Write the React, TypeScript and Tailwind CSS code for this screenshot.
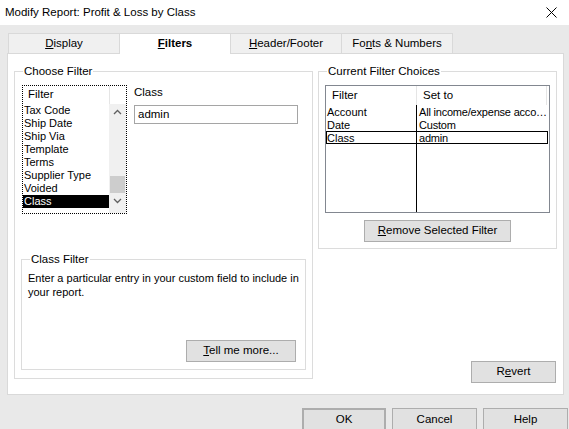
import React from "react";

const ui = { fontFamily: '"Liberation Sans", Arial, sans-serif' };

function Btn({ children, className = "" }: { children: React.ReactNode; className?: string }) {
  return (
    <div
      className={`flex items-center justify-center border border-[#adadad] bg-[#e1e1e1] text-[11.5px] text-black ${className}`}
    >
      {children}
    </div>
  );
}

function Group({ title, className = "", children }: { title: string; className?: string; children: React.ReactNode }) {
  return (
    <div className={`relative border border-[#dcdcdc] ${className}`}>
      <span className="absolute left-[8px] top-[-8px] bg-white px-[1px] text-[11.5px] leading-[14px] text-black">
        {title}
      </span>
      {children}
    </div>
  );
}

const filterItems = ["Tax Code", "Ship Date", "Ship Via", "Template", "Terms", "Supplier Type", "Voided", "Class"];

const choices = [
  ["Account", "All income/expense acco\u2026"],
  ["Date", "Custom"],
  ["Class", "admin"],
];

export default function App() {
  return (
    <div className="h-[429px] w-[569px] overflow-hidden bg-[#e9e9e9] text-black" style={ui}>
      {/* Title bar */}
      <div className="flex h-[25px] items-center justify-between bg-white pl-[5px] pr-[12px]">
        <span className="text-[11.5px]">Modify Report: Profit &amp; Loss by Class</span>
        <svg width="11" height="11" viewBox="0 0 11 11">
          <path d="M0.5 0.5 L10.5 10.5 M10.5 0.5 L0.5 10.5" stroke="#000" strokeWidth="1" />
        </svg>
      </div>

      {/* Tabs */}
      <div className="flex pl-[8px] pt-[8px] text-[11.5px]">
        <div className="flex h-[20px] w-[112px] items-center justify-center border border-b-0 border-[#d9d9d9] bg-[#f0f0f0]">
          <span><u>D</u>isplay</span>
        </div>
        <div className="relative z-10 -mb-px flex h-[21px] w-[111px] items-center justify-center border border-b-0 border-l-0 border-[#d9d9d9] bg-white pb-px font-bold">
          <span><u>F</u>ilters</span>
        </div>
        <div className="flex h-[20px] w-[111px] items-center justify-center border border-b-0 border-l-0 border-[#d9d9d9] bg-[#f0f0f0]">
          <span><u>H</u>eader/Footer</span>
        </div>
        <div className="flex h-[20px] w-[111px] items-center justify-center border border-b-0 border-l-0 border-[#d9d9d9] bg-[#f0f0f0]">
          <span>Fo<u>n</u>ts &amp; Numbers</span>
        </div>
      </div>

      {/* Panel */}
      <div className="ml-[7px] flex h-[342px] w-[557px] gap-[5px] border border-[#d9d9d9] bg-white pl-[6px] pt-[17px]">
        {/* Choose Filter */}
        <Group title="Choose Filter" className="h-[308px] w-[299px]">
          <div className="flex pl-[7px] pt-[13px]">
            {/* filter list */}
            <div className="relative flex h-[129px] w-[105px] flex-col border border-dotted border-black">
              <div className="flex h-[18px] shrink-0 items-center">
                <span className="w-[86px] pl-[5px] text-[11.5px]">Filter</span>
                <span className="h-full w-px bg-[#e5e5e5]" />
              </div>
              <div className="flex flex-1">
                <div className="flex w-[86px] flex-col text-[11px] leading-[13px]">
                  {filterItems.map((it) => (
                    <div
                      key={it}
                      className={`h-[13px] pl-px whitespace-nowrap ${it === "Class" ? "bg-black text-white" : ""}`}
                    >
                      {it}
                    </div>
                  ))}
                </div>
                <div className="flex w-[17px] flex-col items-center bg-[#f0f0f0] pt-[5px]">
                  <svg width="9" height="6" viewBox="0 0 9 6">
                    <path d="M1 5 L4.5 1.5 L8 5" stroke="#606060" strokeWidth="1.3" fill="none" />
                  </svg>
                  <div className="mt-[61px] h-[17px] w-[15px] bg-[#cdcdcd]" />
                  <svg className="mt-[5px]" width="9" height="6" viewBox="0 0 9 6">
                    <path d="M1 1 L4.5 4.5 L8 1" stroke="#606060" strokeWidth="1.3" fill="none" />
                  </svg>
                </div>
              </div>
            </div>

            {/* class field */}
            <div className="ml-[7px] flex flex-col">
              <span className="text-[11.5px] leading-[14px]">Class</span>
              <div className="mt-[6px] flex h-[19px] w-[164px] items-center border border-[#a5a5a5] pl-[3px] text-[11.5px]">
                admin
              </div>
            </div>
          </div>

          {/* Class Filter */}
          <div className="ml-[6px] mt-[45px]">
            <Group title="Class Filter" className="h-[111px] w-[285px]">
              <div className="flex h-full flex-col pl-[6px] pr-[9px] pt-[11px]">
                <p className="whitespace-nowrap text-[11px] leading-[14px]">
                  Enter a particular entry in your custom field to include in
                  <br />
                  your report.
                </p>
                <div className="mt-auto mb-[7px] flex justify-end">
                  <Btn className="h-[22px] w-[110px]">
                    <span><u>T</u>ell me more...</span>
                  </Btn>
                </div>
              </div>
            </Group>
          </div>
        </Group>

        {/* Right column */}
        <div className="flex w-[239px] flex-col">
          <Group title="Current Filter Choices" className="h-[178px] w-[239px]">
            <div className="flex flex-col items-center pt-[13px]">
              <div className="flex h-[128px] w-[225px] flex-col border border-[#828790]">
                <div className="flex h-[19px] shrink-0 items-center text-[11.5px]">
                  <span className="w-[90px] shrink-0 pl-[6px]">Filter</span>
                  <span className="h-full w-px shrink-0 bg-[#e5e5e5]" />
                  <span className="flex-1 pl-[6px]">Set to</span>
                  <span className="mr-[2px] h-full w-px shrink-0 bg-[#e5e5e5]" />
                </div>
                <div className="relative flex flex-1 text-[11px] leading-[13px]">
                  <div className="absolute bottom-0 left-[90px] top-0 w-px bg-black" />
                  <div className="flex w-full flex-col">
                    {choices.map(([a, b], i) => (
                      <div
                        key={a}
                        className={`flex h-[13px] whitespace-nowrap ${i === 2 ? "mr-px border border-black" : "border border-transparent"}`}
                      >
                        <span className="w-[90px] shrink-0">{a}</span>
                        <span className="pl-[2px] tracking-[-0.2px]">{b}</span>
                      </div>
                    ))}
                  </div>
                </div>
              </div>
              <Btn className="mt-[7px] h-[22px] w-[147px]">
                <span><u>R</u>emove Selected Filter</span>
              </Btn>
            </div>
          </Group>
          <div className="mt-auto mb-[11px] flex justify-end pr-px">
            <Btn className="h-[22px] w-[85px]">
              <span>R<u>e</u>vert</span>
            </Btn>
          </div>
        </div>
      </div>

      {/* Dialog buttons */}
      <div className="mt-[13px] flex justify-end gap-[6px] pr-px">
        <Btn className="h-[24px] w-[84px] border-2 border-[#0078d7]">OK</Btn>
        <Btn className="h-[24px] w-[85px]">Cancel</Btn>
        <Btn className="h-[24px] w-[85px]">Help</Btn>
      </div>
    </div>
  );
}
